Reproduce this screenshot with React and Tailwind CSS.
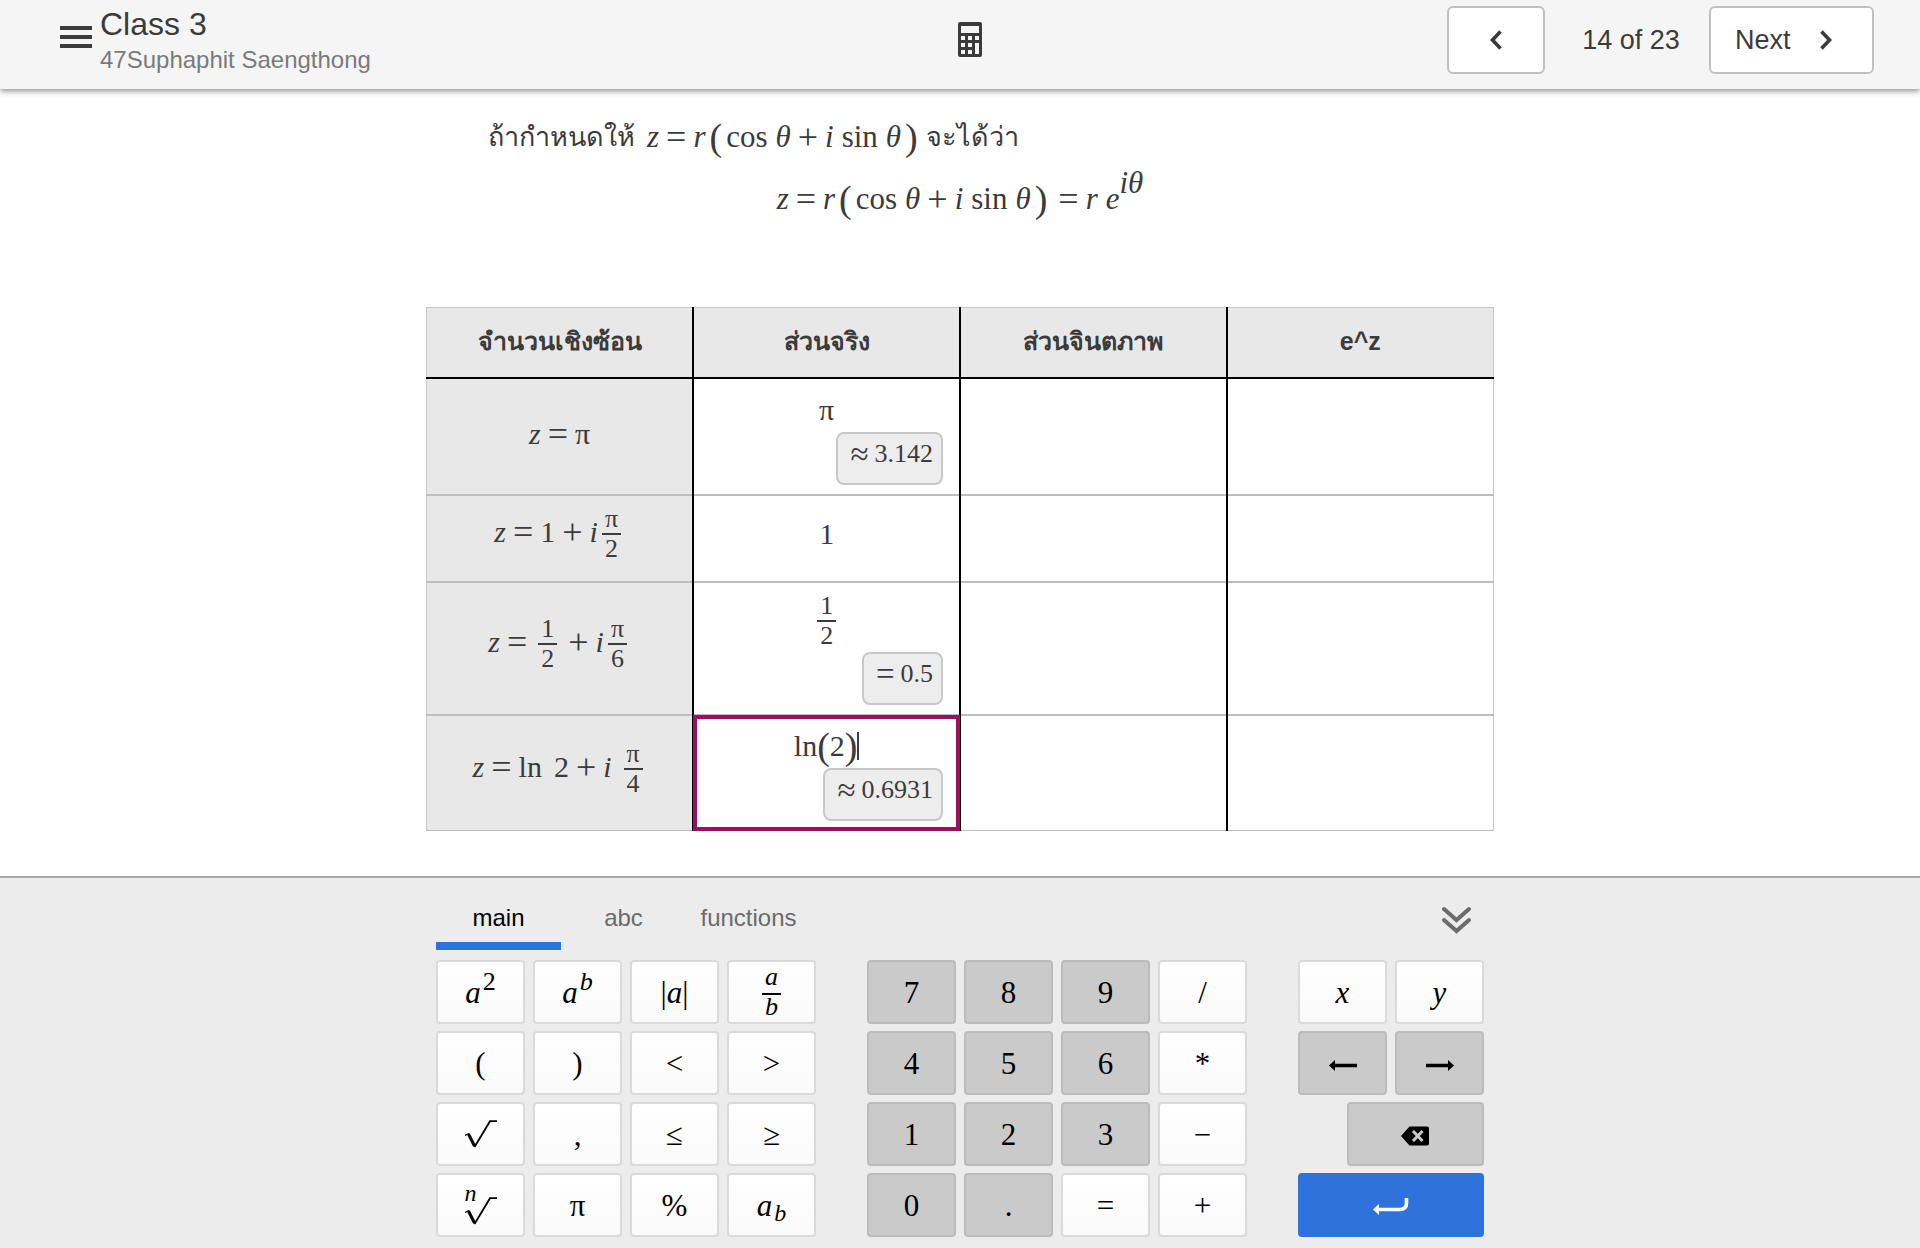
import { useState } from "react";
import clsx from "clsx";

// ----------------- Math pieces -----------------
const V = ({ children }) => <i>{children}</i>;

const Op = ({ children }) => <span className="mx-[7px] text-[36px]">{children}</span>;

const Paren = ({ wide, children }) => (
  <span className={clsx("text-[38px]", wide && "mx-1")}>{children}</span>
);

const Frac = ({ top, bottom }) => (
  <span className="mx-1 mt-1 inline-flex flex-col items-center text-[26px] leading-7">
    <span className="border-b-2 border-[#3b3b3b] px-[3px]">{top}</span>
    <span>{bottom}</span>
  </span>
);

const Polar = () => (
  <>
    <V>z</V>
    <Op>=</Op>
    <V>r</V>
    <Paren wide>(</Paren>
    <span className="mr-2">cos</span>
    <V>θ</V>
    <Op>+</Op>
    <V>i</V>
    <span className="mx-2">sin</span>
    <V>θ</V>
    <Paren wide>)</Paren>
  </>
);

const headers = ["จำนวนเชิงซ้อน", "ส่วนจริง", "ส่วนจินตภาพ", "e^z"];

const rows = [
  {
    id: "pi",
    label: <><V>z</V><Op>=</Op>π</>,
    labelPad: "pb-1",
    real: "π",
    result: ["≈", "3.142"],
    height: "h-[117px]",
  },
  {
    id: "one",
    label: <><V>z</V><Op>=</Op>1<Op>+</Op><V>i</V><Frac top="π" bottom="2" /></>,
    labelPad: "pb-3",
    real: "1",
    height: "h-[87px]",
  },
  {
    id: "half",
    label: <><V>z</V><Op>=</Op><Frac top="1" bottom="2" /><Op>+</Op><V>i</V><Frac top="π" bottom="6" /></>,
    labelPad: "pb-3",
    real: <Frac top="1" bottom="2" />,
    result: ["=", "0.5"],
    height: "h-[133px]",
  },
  {
    id: "ln",
    label: <><V>z</V><Op>=</Op><span className="mr-3">ln</span>2<Op>+</Op><V>i</V><span className="w-2" /><Frac top="π" bottom="4" /></>,
    labelPad: "pb-3",
    real: <>ln<Paren>(</Paren>2<Paren>)</Paren><span className="h-7 w-[2px] bg-[#3b3b3b]" /></>,
    result: ["≈", "0.6931"],
    height: "h-[116px]",
    active: true,
  },
];

// ----------------- Icons -----------------
const Chevron = ({ flip }) => (
  <svg className="h-5 w-3" viewBox="0 0 12 20" fill="none" stroke="#3b3b3b" strokeWidth="3.6">
    <path d={flip ? "M1.5 1.5 9.5 10 1.5 18.5" : "M10.5 1.5 2.5 10 10.5 18.5"} />
  </svg>
);

const CalculatorIcon = () => (
  <svg className="h-[35px] w-6" viewBox="0 0 24 35">
    <rect width="24" height="35" rx="2" fill="#3b3b3b" />
    <g fill="#f5f5f5">
      <rect x="3" y="4" width="18" height="7" />
      <rect x="3" y="14" width="4" height="4" />
      <rect x="10" y="14" width="4" height="4" />
      <rect x="17" y="14" width="4" height="4" />
      <rect x="3" y="21" width="4" height="4" />
      <rect x="10" y="21" width="4" height="4" />
      <rect x="17" y="21" width="4" height="11" />
      <rect x="3" y="28" width="4" height="4" />
      <rect x="10" y="28" width="4" height="4" />
    </g>
  </svg>
);

const Root = () => (
  <svg className="h-7 w-8" viewBox="0 0 32 28" fill="none" stroke="#000">
    <path d="M0 15.5 4 13.5" strokeWidth="1.2" />
    <path d="M3.5 14 9.5 26" strokeWidth="3" />
    <path d="M9.5 27 25 1.2H32" strokeWidth="1.8" />
  </svg>
);

const Arrow = ({ flip }) => (
  <svg className="mt-1 h-[11px] w-7" viewBox="0 0 28 11">
    <path d={flip ? "M0 3.8h22V0l6 5.5-6 5.5V7.2H0z" : "M28 3.8H6V0L0 5.5 6 11V7.2h22z"} />
  </svg>
);

const BackspaceIcon = () => (
  <svg className="mt-1 h-5 w-7" viewBox="0 0 28 20">
    <path d="M8.5.5H26a2 2 0 0 1 2 2v15a2 2 0 0 1-2 2H8.5L0 10z" />
    <path d="m12 5 9.5 10M21.5 5 12 15" stroke="#cacaca" strokeWidth="3" />
  </svg>
);

const EnterIcon = () => (
  <svg className="mt-1 h-[18px] w-9" viewBox="0 0 36 18">
    <path d="M33.5 0v5q0 6.5-7 6.5H5" fill="none" stroke="#fff" strokeWidth="3.6" />
    <path d="M0 11.5 6 6v11z" fill="#fff" />
  </svg>
);

// ----------------- Keypad -----------------
const mathKeys = [
  { name: "squared", face: <><V>a</V><span className="mb-5 ml-[2px] text-[26px]">2</span></> },
  { name: "power", face: <><V>a</V><span className="mb-5 ml-[2px] text-[26px]"><V>b</V></span></> },
  { name: "absolute value", face: <>|<V>a</V>|</> },
  {
    name: "fraction",
    face: (
      <span className="flex flex-col items-center text-[26px] leading-6">
        <span className="border-b-2 border-black px-[3px] pb-1"><V>a</V></span>
        <V>b</V>
      </span>
    ),
  },
  { name: "left paren", face: "(" },
  { name: "right paren", face: ")" },
  { name: "less than", face: "<" },
  { name: "greater than", face: ">" },
  { name: "square root", face: <Root /> },
  { name: "comma", face: "," },
  { name: "less or equal", face: "≤" },
  { name: "greater or equal", face: "≥" },
  {
    name: "nth root",
    face: (
      <span className="flex flex-col items-start">
        <span className="-mb-1 text-2xl leading-4"><V>n</V></span>
        <Root />
      </span>
    ),
  },
  { name: "pi", face: "π" },
  { name: "percent", face: "%" },
  { name: "subscript", face: <><V>a</V><span className="mt-4 ml-[2px] text-2xl"><V>b</V></span></> },
];

const numberKeys = ["7", "8", "9", "/", "4", "5", "6", "*", "1", "2", "3", "−", "0", ".", "=", "+"];

const tabs = ["main", "abc", "functions"];

function Key({ name, dark, blue, className, children }) {
  return (
    <button
      aria-label={name}
      className={clsx(
        "flex h-16 items-center justify-center rounded border-2 leading-none",
        blue && "border-[#2f72dc] bg-[#2f72dc]",
        dark && "border-[#bcbcbc] bg-[#cacaca]",
        !blue && !dark && "border-[#dadada] bg-linear-to-b from-white to-[#fafafa]",
        className
      )}
    >
      {children}
    </button>
  );
}

function Keypad() {
  const [tab, setTab] = useState("main");

  return (
    <section className="border-t-2 border-[#a8a8a8] bg-[#ececec] pb-[11px]">
      <div className="mx-auto max-w-[1048px]">

        <div className="mb-[10px] flex h-[72px] items-stretch">
          {tabs.map((t) => (
            <button
              key={t}
              onClick={() => setTab(t)}
              className={clsx(
                "w-[125px] border-b-8 pt-4 text-2xl",
                tab === t ? "border-[#2f72dc] text-black" : "border-transparent text-[#6b6b6b]"
              )}
            >
              {t}
            </button>
          ))}
          <button aria-label="Hide keypad" className="mr-[13px] ml-auto pt-3">
            <svg className="h-7 w-[29px]" viewBox="0 0 29 28" fill="none" stroke="#6b6b6b" strokeWidth="4" strokeLinecap="round">
              <path d="M2 3 14.5 14 27 3M2 14 14.5 25 27 14" />
            </svg>
          </button>
        </div>

        <div className="flex justify-between font-['Liberation_Serif',serif] text-[31px] text-black">
          <div className="grid w-[380px] grid-cols-4 gap-x-2 gap-y-[7px]">
            {mathKeys.map((k) => (
              <Key key={k.name} name={k.name}>{k.face}</Key>
            ))}
          </div>

          <div className="grid w-[380px] grid-cols-4 gap-x-2 gap-y-[7px]">
            {numberKeys.map((k) => (
              <Key key={k} name={k} dark={/[0-9.]/.test(k)}>{k}</Key>
            ))}
          </div>

          <div className="grid w-[186px] grid-cols-4 gap-x-2 gap-y-[7px]">
            <Key name="x" className="col-span-2"><V>x</V></Key>
            <Key name="y" className="col-span-2"><V>y</V></Key>
            <Key name="left" dark className="col-span-2"><Arrow /></Key>
            <Key name="right" dark className="col-span-2"><Arrow flip /></Key>
            <Key name="backspace" dark className="col-span-3 col-start-2"><BackspaceIcon /></Key>
            <Key name="enter" blue className="col-span-4"><EnterIcon /></Key>
          </div>
        </div>

      </div>
    </section>
  );
}

function AnswerCell({ row }) {
  return (
    <div className="flex flex-col pb-[9px]">
      <span className="flex min-h-10 items-center justify-center leading-10">{row.real}</span>
      {row.result && (
        <span className="mt-[2px] mr-4 flex h-[53px] items-start gap-[6px] self-end rounded-lg border-2 border-[#c8c8c8] bg-[#ededed] pr-2 pl-3 text-[26px] leading-10">
          <span className="text-[33px]">{row.result[0]}</span>
          {row.result[1]}
        </span>
      )}
    </div>
  );
}

export default function App() {
  return (
    <div className="flex min-h-screen flex-col bg-white font-['Liberation_Sans',sans-serif] text-[#3b3b3b]">

      <header className="relative grid h-[89px] grid-cols-[1fr_auto_1fr] items-start bg-[#f5f5f5] shadow-[0_2px_6px_rgba(0,0,0,0.45)]">
        <div className="flex pl-[60px]">
          <button aria-label="Menu" className="mt-[26px] flex h-[22px] w-8 flex-col justify-between">
            <span className="h-1 w-full bg-[#3b3b3b]" />
            <span className="h-1 w-full bg-[#3b3b3b]" />
            <span className="h-1 w-full bg-[#3b3b3b]" />
          </button>
          <div className="ml-2 pt-1">
            <h1 className="text-[32px] leading-10">Class 3</h1>
            <p className="text-2xl leading-8 text-[#7a7a7a]">47Suphaphit Saengthong</p>
          </div>
        </div>

        <button aria-label="Calculator" className="ml-5 mt-[22px]">
          <CalculatorIcon />
        </button>

        <div className="flex items-center justify-end pt-[6px] pr-[46px] text-[27px]">
          <button aria-label="Previous" className="flex h-[68px] w-[98px] items-center justify-center rounded-md border-2 border-[#c0c0c0] bg-white">
            <Chevron />
          </button>
          <span className="w-[164px] pl-2 text-center">14 of 23</span>
          <button className="flex h-[68px] w-[165px] items-center justify-between rounded-md border-2 border-[#c0c0c0] bg-white pr-10 pl-6">
            Next
            <Chevron flip />
          </button>
        </div>
      </header>

      <main className="mx-auto w-full max-w-[1068px] flex-1">
        <div className="font-['Liberation_Serif',serif] text-[31px] leading-10">
          <p className="mt-7 flex items-center pl-[62px]">
            <span className="mr-3 text-[27px]">ถ้ากำหนดให้</span>
            <Polar />
            <span className="ml-1 text-[27px]">จะได้ว่า</span>
          </p>
          <p className="mt-[22px] flex items-center justify-center">
            <Polar />
            <Op>=</Op>
            <V>r</V>
            <span className="ml-2"><V>e</V></span>
            <span className="-mt-8"><V>iθ</V></span>
          </p>
        </div>

        <table className="mt-[88px] mb-9 w-full table-fixed border-collapse border border-[#c8c8c8]">
          <thead>
            <tr className="h-[70px] border-b-2 border-black bg-[#e8e8e8]">
              {headers.map((h) => (
                <th key={h} className="border-r-2 border-black pb-[2px] text-[25px] font-bold last:border-r last:border-r-[#c8c8c8]">{h}</th>
              ))}
            </tr>
          </thead>
          <tbody className="font-['Liberation_Serif',serif] text-[30px]">
            {rows.map((row) => (
              <tr key={row.id} className={clsx("border-b-2 border-[#bdbdbd] last:border-b", row.height)}>
                <th className="border-r-2 border-black bg-[#e8e8e8] font-normal">
                  <span className={clsx("flex items-center justify-center leading-10", row.labelPad)}>{row.label}</span>
                </th>
                <td
                  className={clsx(
                    "border-r-2 border-black",
                    row.result ? "align-bottom" : "align-middle",
                    row.active && "outline-4 -outline-offset-4 outline-[#991063]"
                  )}
                >
                  <AnswerCell row={row} />
                </td>
                <td className="border-r-2 border-black" />
                <td />
              </tr>
            ))}
          </tbody>
        </table>
      </main>

      <Keypad />
    </div>
  );
}
